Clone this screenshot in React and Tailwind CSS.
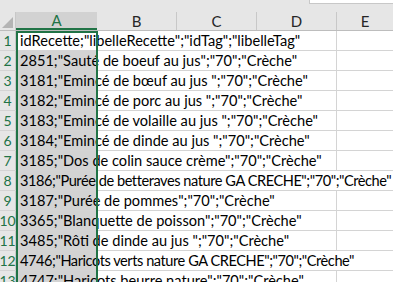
import React from 'react';

const rows = [
  { n: 1, text: 'idRecette;"libelleRecette";"idTag";"libelleTag"', long: false },
  { n: 2, text: '2851;"Sauté de boeuf au jus";"70";"Crèche"', long: false },
  { n: 3, text: '3181;"Emincé de bœuf au jus ";"70";"Crèche"', long: false },
  { n: 4, text: '3182;"Emincé de porc au jus ";"70";"Crèche"', long: false },
  { n: 5, text: '3183;"Emincé de volaille au jus ";"70";"Crèche"', long: false },
  { n: 6, text: '3184;"Emincé de dinde au jus ";"70";"Crèche"', long: false },
  { n: 7, text: '3185;"Dos de colin sauce crème";"70";"Crèche"', long: false },
  { n: 8, text: '3186;"Purée de betteraves nature GA CRECHE";"70";"Crèche"', long: true },
  { n: 9, text: '3187;"Purée de pommes";"70";"Crèche"', long: false },
  { n: 10, text: '3365;"Blanquette de poisson";"70";"Crèche"', long: false },
  { n: 11, text: '3485;"Rôti de dinde au jus ";"70";"Crèche"', long: false },
  { n: 12, text: '4746;"Haricots verts nature GA CRECHE";"70";"Crèche"', long: true },
  { n: 13, text: '4747;"Haricots beurre nature";"70";"Crèche"', long: false },
];

const cols = ['B', 'C', 'D'];

export default function App() {
  return (
    <div
      className="relative w-[393px] h-[282px] overflow-hidden bg-white text-[14.6px] text-black"
      style={{ fontFamily: 'Lato, "Liberation Sans", sans-serif' }}
    >
      {/* top strip */}
      <div className="h-[12px] bg-[#e6e6e6] flex justify-end">
        <div className="w-[84px] h-[4px] bg-white border-l border-b border-[#c8c8c8]" />
      </div>

      {/* column headers */}
      <div className="flex h-[19px] bg-[#e6e6e6] border-b border-[#bdbdbd] text-[15px]">
        <div className="w-[16px] border-r border-[#c8c8c8] relative">
          <div className="absolute right-[2px] bottom-[2px] w-0 h-0 border-l-[11px] border-l-transparent border-b-[11px] border-b-[#b4b4b4]" />
        </div>
        <div className="w-[81px] bg-[#d2d2d2] border-b-2 border-[#217346] flex items-center justify-center text-[#217346]">
          A
        </div>
        {cols.map((c) => (
          <div key={c} className="w-[80px] border-r border-[#c8c8c8] flex items-center justify-center text-[#262626]">
            {c}
          </div>
        ))}
        <div className="flex-1 flex items-center justify-center text-[#262626]">E</div>
      </div>

      {/* rows */}
      {rows.map((r) => (
        <div key={r.n} className="flex h-[20px] border-b border-[#d4d4d4]">
          <div className="w-[16px] shrink-0 bg-[#e6e6e6] border-r border-[#c8c8c8] flex items-center justify-center text-[#217346] text-[14px] leading-none">
            {r.n}
          </div>
          <div className="relative w-[321px] shrink-0 flex items-center">
            <div className={`absolute left-0 top-0 w-[81px] h-full ${r.n === 1 ? 'bg-white' : 'bg-[#d3d3d3]'}`} />
            {!r.long && <div className="absolute right-0 top-0 w-px h-full bg-[#d4d4d4]" />}
            <span
              className={`relative pl-[4px] pt-[2px] whitespace-nowrap leading-none ${
                r.long ? 'tracking-[-0.45px]' : ''
              }`}
            >
              {r.text}
            </span>
          </div>
          <div className="flex-1" />
        </div>
      ))}

      {/* selection border around column A */}
      <div className="absolute left-[16px] top-[31px] w-[82px] h-[260px] border-2 border-[#217346] border-b-0 pointer-events-none" />
    </div>
  );
}
